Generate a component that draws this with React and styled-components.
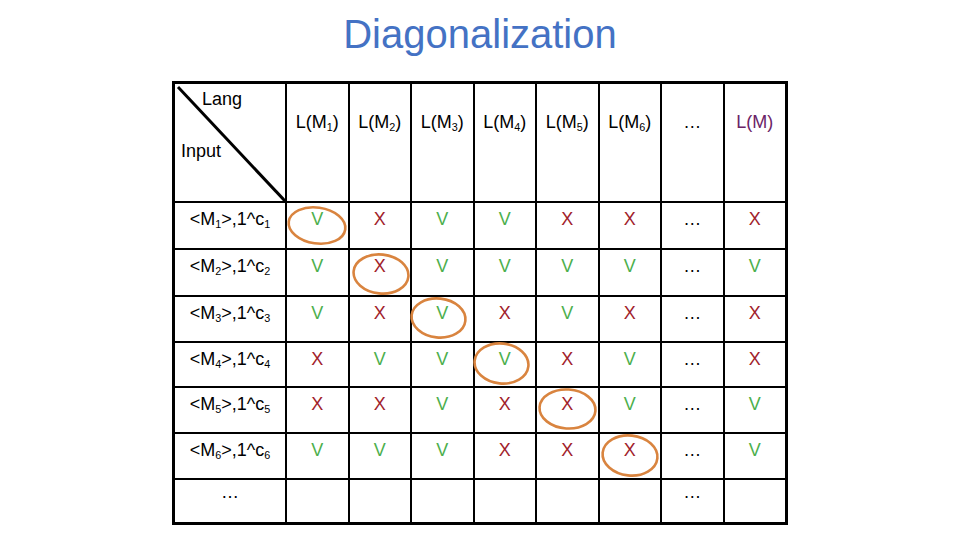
import React from 'react'
import styled, { createGlobalStyle } from 'styled-components'

const GlobalStyle = createGlobalStyle`
  html, body {
    margin: 0;
    padding: 0;
    background: #ffffff;
  }
  body {
    font-family: "Liberation Sans", Arial, sans-serif;
    color: #000;
  }
`

const Slide = styled.div`
  width: 960px;
  height: 540px;
  display: flex;
  flex-direction: column;
  align-items: center;
  padding-top: 11px;
  box-sizing: border-box;
`

const Title = styled.h1`
  margin: 0;
  font-weight: normal;
  font-size: 40px;
  line-height: 46px;
  color: #4472c4;
`

const Grid = styled.div`
  margin-top: 24px;
  width: 616px;
  box-sizing: border-box;
  padding: 3px;
  background: #000;
  display: grid;
  grid-template-columns: 110px repeat(8, 1fr);
  grid-template-rows: 117px 45px 45px 44px 43px 44px 44px 42px;
  gap: 2px;
`

const Cell = styled.div`
  position: relative;
  background: #fff;
  display: flex;
  justify-content: center;
  align-items: flex-start;
  padding-top: ${p => p.$pad ?? 6}px;
  box-sizing: border-box;
  font-size: 18px;
  line-height: 21px;
  white-space: nowrap;
  color: ${p => p.$color || '#000'};
`

const Text = styled.span`
  display: inline-block;
`

const Corner = styled.div`
  position: relative;
  background: #fff;
  display: flex;
  flex-direction: column;
  align-items: flex-start;
  padding-top: 5px;
  font-size: 18px;
  line-height: 21px;
`

const CornerLabel = styled.span`
  margin-left: ${p => p.$left}px;
  margin-top: ${p => p.$top || 0}px;
  position: relative;
  z-index: 1;
`

const Slash = styled.svg`
  position: absolute;
  left: 0;
  top: 0;
  width: 100%;
  height: 100%;
`

const Sub = styled.sub`
  font-size: 0.6em;
  vertical-align: -0.3em;
  line-height: 0;
`

const Ring = styled.svg`
  position: absolute;
  overflow: visible;
  pointer-events: none;
`

const GREEN = '#4caf4c'
const RED = '#a11d2b'

const markColor = v => (v === 'V' ? GREEN : v === 'X' ? RED : '#000')

const Ellipse = ({ r }) => (
  <Ring
    style={{ left: r[0], top: r[1], width: r[2], height: r[3] }}
    viewBox={`0 0 ${r[2]} ${r[3]}`}
  >
    <ellipse
      cx={r[2] / 2}
      cy={r[3] / 2}
      rx={r[2] / 2 - 1.5}
      ry={r[3] / 2 - 1.5}
      fill="none"
      stroke="#d9843f"
      strokeWidth="2.6"
      transform={`rotate(${r[4]} ${r[2] / 2} ${r[3] / 2})`}
    />
  </Ring>
)

const rows = [
  ['V', 'X', 'V', 'V', 'X', 'X', '…', 'X'],
  ['V', 'X', 'V', 'V', 'V', 'V', '…', 'V'],
  ['V', 'X', 'V', 'X', 'V', 'X', '…', 'X'],
  ['X', 'V', 'V', 'V', 'X', 'V', '…', 'X'],
  ['X', 'X', 'V', 'X', 'X', 'V', '…', 'V'],
  ['V', 'V', 'V', 'X', 'X', 'X', '…', 'V'],
]

// left, top, width, height, rotation — relative to the diagonal cell
const rings = [
  [0, 3, 60, 39, 8],
  [2, 3, 58, 42, 6],
  [-2, 0, 57, 42, 6],
  [-2, -1, 57, 43, 6],
  [1, 0, 59, 42, 4],
  [1, 0, 58, 43, 6],
]

export default function App() {
  return (
    <Slide>
      <GlobalStyle />
      <Title>Diagonalization</Title>
      <Grid>
        <Corner>
          <Slash viewBox="0 0 110 117" preserveAspectRatio="none">
            <line x1="3" y1="3" x2="110" y2="117" stroke="#000" strokeWidth="3" />
          </Slash>
          <CornerLabel $left={27}>Lang</CornerLabel>
          <CornerLabel $left={6} $top={31}>Input</CornerLabel>
        </Corner>
        {[1, 2, 3, 4, 5, 6].map(n => (
          <Cell key={n} $pad={28}>
            <Text>L(M<Sub>{n}</Sub>)</Text>
          </Cell>
        ))}
        <Cell $pad={28}>…</Cell>
        <Cell $pad={28} $color="#6b2466">L(M)</Cell>

        {rows.map((row, i) => (
          <React.Fragment key={i}>
            <Cell>
              <Text>
                &lt;M<Sub>{i + 1}</Sub>&gt;,1^c<Sub>{i + 1}</Sub>
              </Text>
            </Cell>
            {row.map((v, j) => (
              <Cell key={j} $color={markColor(v)}>
                <Text>{v}</Text>
                {i === j && <Ellipse r={rings[i]} />}
              </Cell>
            ))}
          </React.Fragment>
        ))}

        <Cell $pad={2}>…</Cell>
        <Cell />
        <Cell />
        <Cell />
        <Cell />
        <Cell />
        <Cell />
        <Cell $pad={2}>…</Cell>
        <Cell />
      </Grid>
    </Slide>
  )
}
